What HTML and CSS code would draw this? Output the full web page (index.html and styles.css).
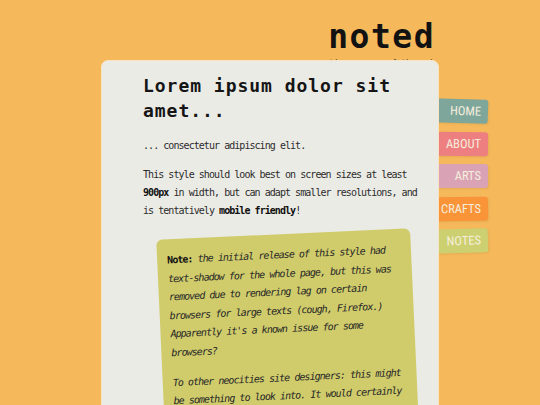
FILE: index.html
```html
<!DOCTYPE html>
<html lang="en">
<head>
<meta charset="utf-8">
<title>noted</title>
<link rel="stylesheet" href="styles.css">
</head>
<body>
<div class="page">
  <header class="masthead">
    <h1 class="logo">noted</h1>
    <p class="tagline">a tiny corner of the web</p>
  </header>
  <div class="layout">
    <main class="card">
      <h2 class="title">Lorem ipsum dolor sit amet...</h2>
      <p>... consectetur adipiscing elit.</p>
      <p>This style should look best on screen sizes at least <b>900px</b> in width, but can adapt smaller resolutions, and is tentatively <b>mobile friendly</b>!</p>
      <div class="note">
        <p><b>Note:</b> the initial release of this style had text-shadow for the whole page, but this was removed due to rendering lag on certain browsers for large texts (cough, Firefox.) Apparently it's a known issue for some browsers?</p>
        <p>To other neocities site designers: this might be something to look into. It would certainly make things easier for a lot of visitors.</p>
      </div>
    </main>
    <nav class="tabs">
      <a class="tab tab-home" href="#">HOME</a>
      <a class="tab tab-about" href="#">ABOUT</a>
      <a class="tab tab-arts" href="#">ARTS</a>
      <a class="tab tab-crafts" href="#">CRAFTS</a>
      <a class="tab tab-notes" href="#">NOTES</a>
    </nav>
  </div>
</div>
</body>
</html>
```
FILE: styles.css
```css
html, body {
  margin: 0;
  padding: 0;
}

body {
  background: #f5b95c;
  font-family: "DejaVu Sans Mono", "Liberation Mono", monospace;
  height: 405px;
  overflow: hidden;
}

.page {
  width: 338px;
  margin: 0 auto;
}

.masthead {
  padding: 17px 4px 0 0;
  text-align: right;
}

.logo {
  margin: 0;
  font-size: 33px;
  line-height: 39px;
  font-weight: bold;
  letter-spacing: 1.5px;
  color: #121212;
}

.tagline {
  margin: 0;
  font-size: 8px;
  line-height: 15px;
  color: #333;
}

.layout {
  display: flex;
  align-items: flex-start;
  margin-top: -11px;
}

.card {
  flex: 0 0 338px;
  box-sizing: border-box;
  min-height: 420px;
  padding: 12px 19px 40px 41px;
  background: #ebebe6;
  border: 1px solid #f8e4c4;
  border-radius: 7px;
  position: relative;
  z-index: 1;
}

.title {
  margin: 0 0 13.5px;
  font-size: 18px;
  line-height: 25px;
  letter-spacing: 0.97px;
  font-weight: bold;
  color: #151515;
}

.card p {
  margin: 0 0 11px;
  font-size: 10px;
  line-height: 18px;
  letter-spacing: -0.95px;
  color: #2b2b2b;
}

.card b {
  color: #111;
}

.note {
  width: 254px;
  box-sizing: border-box;
  margin: 14.5px 0 0 18px;
  padding: 12px 10px 14px;
  background: #d0cc6c;
  border-radius: 6px;
  transform: rotate(-2.6deg);
}

.card .note p {
  line-height: 18.5px;
  margin: 0 0 11.5px;
  font-style: italic;
  color: #262626;
}

.note b {
  font-style: normal;
}

.tabs {
  flex: 0 0 55px;
  margin: 39px 0 0 -6px;
  display: flex;
  flex-direction: column;
  gap: 8.5px;
}

.tab {
  display: block;
  height: 24px;
  line-height: 24px;
  padding-right: 7px;
  text-align: right;
  font-family: "Roboto Condensed", "DejaVu Sans Condensed", sans-serif;
  font-size: 12.5px;
  color: #f5eedd;
  text-decoration: none;
  border-radius: 0 3px 3px 0;
  box-shadow: 1px 1px 2px rgba(120, 80, 20, 0.12);
}

.tab-home { background: #7ea69b; transform: rotate(1.8deg); }
.tab-about { background: #ee7f80; transform: rotate(0.4deg); }
.tab-arts { background: #d9a3b5; }
.tab-crafts { background: #f99439; transform: rotate(-0.4deg); }
.tab-notes { background: #cdd070; transform: rotate(-1.8deg); }
```
